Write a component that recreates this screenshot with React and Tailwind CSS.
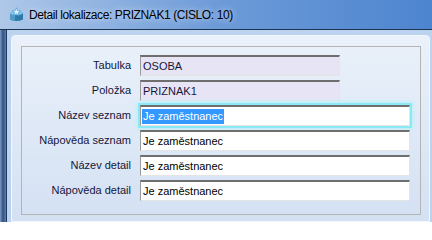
import React from "react";

const rows = [
  { label: "Tabulka", value: "OSOBA", readOnly: true },
  { label: "Položka", value: "PRIZNAK1", readOnly: true },
  { label: "Název seznam", value: "Je zaměstnanec", focused: true },
  { label: "Nápověda seznam", value: "Je zaměstnanec" },
  { label: "Název detail", value: "Je zaměstnanec" },
  { label: "Nápověda detail", value: "Je zaměstnanec" },
];

const AppIcon = () => (
  <svg width="15" height="15" viewBox="0 0 15 15">
    <path d="M1 6 L1 12.5 Q7.5 15.5 14 12.5 L14 6 Z" fill="#2b7aa8" />
    <path d="M1 6 L1 12.5 Q4 13.8 6 14 L6 7 Z" fill="#4f9bc6" />
    <ellipse cx="7.5" cy="6" rx="6.5" ry="2.2" fill="#7cc3e8" />
    <polygon
      points="7.5,0.8 8.7,3.6 11.6,3.8 9.4,5.6 10.1,8.4 7.5,6.9 4.9,8.4 5.6,5.6 3.4,3.8 6.3,3.6"
      fill="#d8f0ff"
      stroke="#3f8fc4"
      strokeWidth="0.6"
    />
  </svg>
);

const Field = ({ value, readOnly, focused }) => (
  <div
    className={`h-[21px] flex items-center pl-[1px] border-t-2 border-l border-r border-b border-t-[#6e6e6e] border-l-[#9a9a9a] border-r-[#e4e4e4] border-b-[#e4e4e4] text-[11px] ${
      readOnly ? "w-[200px] bg-[#e7e5f5] text-[#16163c]" : "w-[270px] bg-white text-black"
    } ${focused ? "shadow-[0_0_0_2px_#8ae9f5,0_0_4px_3px_#b4f2fa]" : ""}`}
  >
    {focused ? (
      <span className="bg-[#3399ff] text-white leading-[15px] px-[1px]">{value}</span>
    ) : (
      <span className="px-[1px]">{value}</span>
    )}
  </div>
);

const App = () => {
  return (
    <div className="w-[432px] h-[222px] overflow-hidden flex flex-col font-['Liberation_Sans',Arial,sans-serif] bg-[#c3d7f1]">
      <div className="h-[30px] shrink-0 flex items-center gap-[5px] pl-[9px] border-b border-[#1e3352] bg-gradient-to-r from-[#afc8e8] via-[#6d9bd8] to-[#4d85cf]">
        <AppIcon />
        <span className="text-[12px] tracking-[-0.4px] text-black [text-shadow:0_0_6px_#dfeaf8]">
          Detail lokalizace: PRIZNAK1 (CISLO: 10)
        </span>
      </div>
      <div className="flex flex-1">
        <div className="w-[7px] shrink-0 border-r border-[#22385c] bg-gradient-to-r from-[#7d9cc8] via-[#34507e] to-[#5a80b8]" />
        <div className="flex-1 pl-[4px] pt-[5px] pr-[2px] bg-[#bcd3f0]">
          <div className="h-full rounded-t-[4px] border border-[#f2f7fd] bg-gradient-to-b from-[#eaf1fa] to-[#d4e1f3] pl-[9px] pr-[8px] pt-[10px]">
            <div className="h-[169px] border border-[#b4b4b4] pt-[8px] flex flex-col gap-[4px]">
              {rows.map((r) => (
                <div key={r.label} className="flex items-center">
                  <div className="w-[109px] text-right text-[11px] text-[#15153a]">{r.label}</div>
                  <div className="ml-[9px]">
                    <Field value={r.value} readOnly={r.readOnly} focused={r.focused} />
                  </div>
                </div>
              ))}
            </div>
          </div>
        </div>
      </div>
    </div>
  );
};

export default App;
